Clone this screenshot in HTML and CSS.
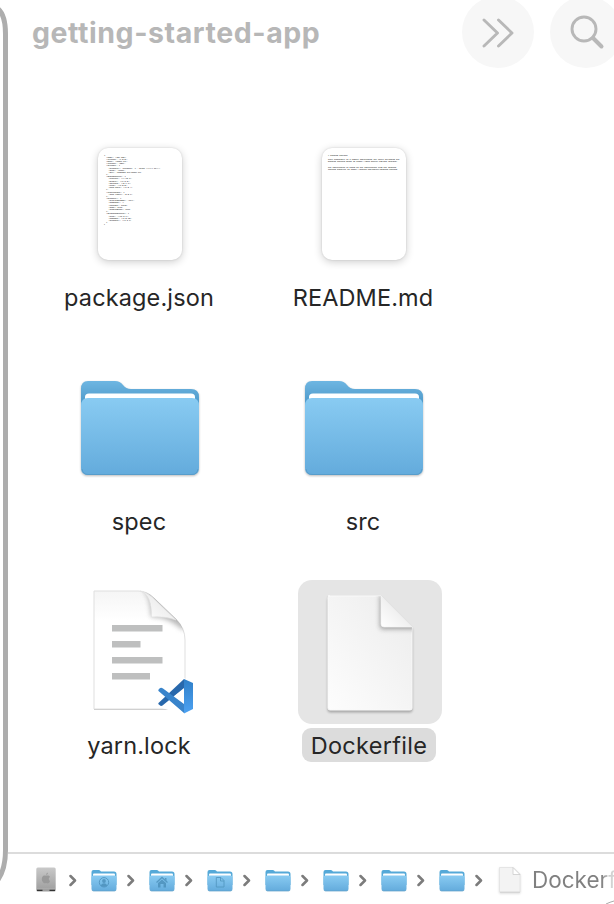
FILE: index.html
```html
<!DOCTYPE html>
<html lang="en">
<head>
<meta charset="utf-8">
<title>getting-started-app</title>
<link rel="stylesheet" href="styles.css">
</head>
<body>
<svg class="defs" width="0" height="0" aria-hidden="true">
  <defs>
    <linearGradient id="front" x1="0" y1="0" x2="0" y2="1"><stop offset="0" stop-color="#89cbf2"/><stop offset="1" stop-color="#63abdc"/></linearGradient>
    <linearGradient id="back" x1="0" y1="0" x2="0" y2="1"><stop offset="0" stop-color="#6eb6e2"/><stop offset=".25" stop-color="#529dcd"/></linearGradient>
    <linearGradient id="sheet" x1="1" y1="0" x2="0" y2="1"><stop offset="0" stop-color="#ececec"/><stop offset="1" stop-color="#fdfdfd"/></linearGradient>
    <linearGradient id="page" x1="0" y1="0" x2="0" y2="1"><stop offset="0" stop-color="#f5f5f5"/><stop offset=".25" stop-color="#fff"/></linearGradient>
    <linearGradient id="fold" x1="0" y1="1" x2=".6" y2=".4"><stop offset="0" stop-color="#fff"/><stop offset="1" stop-color="#ededed"/></linearGradient>
    <filter id="soft" x="-50%" y="-50%" width="200%" height="200%"><feGaussianBlur stdDeviation="2.8"/></filter>
    <linearGradient id="metal" x1="0" y1="0" x2="0" y2="1"><stop offset="0" stop-color="#c9c9c9"/><stop offset="1" stop-color="#9c9c9c"/></linearGradient>
    <linearGradient id="codeblue" x1="0" y1="0" x2="0" y2="1"><stop offset="0" stop-color="#2f7fc8"/><stop offset="1" stop-color="#4da2f2"/></linearGradient>
    <clipPath id="blankclip"><path d="M2 1H55L86 32V113Q86 115 84 115H4Q2 115 2 113V3Q2 1 4 1Z"/></clipPath>
    <clipPath id="lockclip"><path d="M1 1H45Q54 1 61 8L83 29Q92 38 92 50V119H1Z"/></clipPath>
    <symbol id="folder" viewBox="0 0 120 98">
      <path d="M1 10Q1 2 8 2H35Q40 2 43 6Q46 10 51 10H111Q119 10 119 18V80H1Z" fill="url(#back)"/>
      <path d="M5 30V18Q5 14.500 9 14.500H111Q115 14.500 115 18V30Z" fill="#fff"/>
      <path d="M1 27Q1 19 8 19H112Q119 19 119 27V89Q119 96 112 96H8Q1 96 1 89Z" fill="url(#front)"/>
      <path d="M2 90Q3 95.500 8 95.500H112Q117 95.500 118 90" fill="none" stroke="#579dcb"/>
    </symbol>
    <symbol id="smallfolder" viewBox="0 0 26 23">
      <path d="M.5 3Q.5 1 2.500 1H8Q9 1 10 2.500H23Q25.500 2.500 25.500 5V16H.5Z" fill="#55a9d8"/>
      <path d="M2 9V5.500Q2 4.500 3 4.500H23Q24 4.500 24 5.500V9Z" fill="#fff"/>
      <path d="M.5 8.500Q.5 6.500 2.500 6.500H23.500Q25.500 6.500 25.500 8.500V20Q25.500 22 23.500 22H2.500Q.5 22 .5 20Z" fill="url(#front)"/>
      <path d="M1 21Q1.500 22 2.500 22H23.500Q24.500 22 25 21" fill="none" stroke="#609fc6" stroke-width=".7"/>
    </symbol>
    <symbol id="chevron" viewBox="0 0 8 12"><path d="M1.500 1.500L6 6L1.500 10.500" fill="none" stroke="#7c7c7c" stroke-width="2.500" stroke-linecap="round" stroke-linejoin="round"/></symbol>
  </defs>
</svg>

<main class="window">
  <header class="toolbar">
    <h1>getting-started-app</h1>
    <button class="round" aria-label="More"><svg width="72" height="72" viewBox="0 0 72 72"><path d="M22 24L35.500 37L22 50M36.500 24L50 37L36.500 50" class="tool"/></svg></button>
    <button class="round" aria-label="Search"><svg width="72" height="72" viewBox="0 0 72 72"><circle cx="34" cy="33" r="12" class="tool"/><path d="M43 42L51.500 50.500" class="tool handle"/></svg></button>
  </header>

  <section class="files">
    <div class="file">
      <div class="thumb"><div class="preview"><svg class="mini" width="84" height="112"><g class="code"></g></svg></div></div>
      <span class="name">package.json</span>
    </div>
    <div class="file">
      <div class="thumb"><div class="preview"><svg class="mini" width="84" height="112"><g class="readme"></g></svg></div></div>
      <span class="name">README.md</span>
    </div>
    <div class="file">
      <div class="thumb"><svg class="bigfolder" width="120" height="98"><use href="#folder"/></svg></div>
      <span class="name">spec</span>
    </div>
    <div class="file">
      <div class="thumb"><svg class="bigfolder" width="120" height="98"><use href="#folder"/></svg></div>
      <span class="name">src</span>
    </div>
    <div class="file">
      <div class="thumb">
        <svg class="lock" width="102" height="126" viewBox="0 0 102 126">
          <path d="M1 1H45Q54 1 61 8L83 29Q92 38 92 50V119H1Z" fill="url(#page)" stroke="#dfdfdf"/>
          <g clip-path="url(#lockclip)"><path d="M50 0Q57 4 58 27Q74 26 90 40L98 30L60 -4Z" fill="#888" opacity=".6" filter="url(#soft)"/></g>
          <path d="M1 119.500H82" stroke="#d0d0d0"/>
          <path d="M47 1Q59 4 58.500 27Q72 26 83 30L59 7Q53 2 47 1Z" fill="url(#fold)" stroke="#e2e2e2" stroke-width=".7"/>
          <path d="M19 35H69.500V41.500H19ZM19 51H47.500V57.500H19ZM19 67H69.500V73.500H19ZM19 83H57V89.500H19Z" fill="#bebfbf"/>
          <path d="M64 101L69 97L91 88L101 92V120L91 125L69 118L64 114L73 107Z" fill="#fff"/>
          <path d="M65.500 113L91 89V98L69.500 115.500Q68 116.500 66.500 115Q64.500 114 65.500 113Z" fill="#2868ac"/>
          <path d="M65.500 101Q64.500 100 66.500 98.500Q68 97 70 98.500L91 114V123Z" fill="#3984cb"/>
          <path d="M91 89L100 93V119L91 123.500Z" fill="url(#codeblue)"/>
          <path d="M91 99V113L81.500 106Z" fill="#fff"/>
        </svg>
      </div>
      <span class="name">yarn.lock</span>
    </div>
    <div class="file selected">
      <div class="thumb">
        <svg class="blank" width="90" height="118" viewBox="0 0 90 118">
          <path d="M2 1H55L86 32V113Q86 115 84 115H4Q2 115 2 113V3Q2 1 4 1Z" fill="url(#sheet)" stroke="#f9f9f9"/>
          <g clip-path="url(#blankclip)"><path d="M54 0V31Q54 34 57 34H90V12Z" fill="#777" opacity=".7" filter="url(#soft)"/></g>
          <path d="M55 1V29Q55 32 58 32H86Z" fill="url(#fold)" stroke="#f4f4f4" stroke-width=".7"/>
        </svg>
      </div>
      <span class="name">Dockerfile</span>
    </div>
  </section>

  <footer class="path">
    <svg class="drive" width="20" height="25" viewBox="0 0 20 25"><rect x=".3" y=".5" width="19.400" height="24" rx="1.500" fill="url(#metal)"/><path d="M1 21.500H19" stroke="#aaa"/><path d="M1 23.300H6.500M13.500 23.300H19" stroke="#333" stroke-width="1.200"/><path d="M10 8.800C11.500 8 14 8.500 14 10C12 11 13 13.500 14 14C13 17 11.500 16.500 10 16C8.500 16.500 7.500 16.500 6.200 14C5 10.500 7 7.500 10 8.800ZM10 8Q10 6.200 12 5.500Q12 7.500 10 8Z" fill="#999"/></svg>
    <svg class="sep" width="8" height="13"><use href="#chevron"/></svg>
    <svg class="step" width="26" height="23" viewBox="0 0 26 23"><use href="#smallfolder"/><g fill="#4b8fba" opacity=".8"><circle cx="13" cy="13.300" r="4.700" fill="none" stroke="#4b8fba"/><circle cx="13" cy="12" r="1.900"/><path d="M9.500 16.500Q13 12 16.500 16.500Q13 19 9.500 16.500Z"/></g></svg>
    <svg class="sep" width="8" height="13"><use href="#chevron"/></svg>
    <svg class="step" width="26" height="23" viewBox="0 0 26 23"><use href="#smallfolder"/><g opacity=".8"><path d="M7.500 13.500L13 8.500L18.500 13.500" fill="none" stroke="#4b8fba" stroke-width="1.300"/><path d="M9 14L13 10.500L17 14V18.500H14.500V15H11.500V18.500H9ZM16 9H17.500V12L16 10.500Z" fill="#4b8fba"/></g></svg>
    <svg class="sep" width="8" height="13"><use href="#chevron"/></svg>
    <svg class="step" width="26" height="23" viewBox="0 0 26 23"><use href="#smallfolder"/><path d="M9.300 8.500H14L17 11.500V18H9.300ZM13.500 8.500V12H17" fill="none" stroke="#5498c2" stroke-width=".9"/></svg>
    <svg class="sep" width="8" height="13"><use href="#chevron"/></svg>
    <svg class="step" width="26" height="23"><use href="#smallfolder"/></svg>
    <svg class="sep" width="8" height="13"><use href="#chevron"/></svg>
    <svg class="step" width="26" height="23"><use href="#smallfolder"/></svg>
    <svg class="sep" width="8" height="13"><use href="#chevron"/></svg>
    <svg class="step" width="26" height="23"><use href="#smallfolder"/></svg>
    <svg class="sep" width="8" height="13"><use href="#chevron"/></svg>
    <svg class="step" width="26" height="23"><use href="#smallfolder"/></svg>
    <svg class="sep" width="8" height="13"><use href="#chevron"/></svg>
    <svg class="doc" width="22" height="26" viewBox="0 0 22 26"><path d="M.5.500H14L21 7.500V25H.5Z" fill="#f3f3f3" stroke="#e5e5e5"/><path d="M14 .5V7.500H21Z" fill="#fff" stroke="#ccc" stroke-width=".8"/><path d="M1 25.300H21" stroke="#ccc" stroke-width=".7"/></svg>
    <span class="current">Dockerfile</span>
  </footer>
  <svg class="edge" width="9" height="904" viewBox="0 0 9 904"><path d="M-3 8Q5.500 14 5.500 34V850Q5.500 870 -3 881" fill="none" stroke="#adadad" stroke-width="5"/></svg>
  <svg class="corner" width="8" height="4"><path d="M0 4Q4 2 8 1" fill="none" stroke="#aaa"/></svg>
</main>
<script src="script.js"></script>
</body>
</html>
```

FILE: styles.css
```css
* { box-sizing: border-box; }
body { margin: 0; background: #fff; font-family: Inter, "Liberation Sans", sans-serif; color: #262626; }
svg { display: block; flex: none; }
.defs { position: absolute; }
.window { position: relative; width: 614px; height: 904px; overflow: hidden; display: flex; flex-direction: column; background: #fff; }
.toolbar { display: flex; height: 132px; padding-left: 32px; align-items: flex-start; }
h1 { margin: 15px 0 0; width: 430px; flex: none; font-size: 28.500px; line-height: 35px; font-weight: 700; color: #b7b7b7; white-space: nowrap; letter-spacing: .55px; }
.round { flex: none; width: 72px; height: 72px; padding: 0; margin: -4px 16px 0 0; border: 0; border-radius: 50%; background: #f7f7f7; }
.tool { fill: none; stroke: #b8b8b8; stroke-width: 2.900; stroke-linecap: round; stroke-linejoin: round; }
.handle { stroke-width: 4; }
.files { display: grid; grid-template-columns: 224px 224px; grid-template-rows: 224px 224px 224px; padding-left: 28px; height: 720px; }
.file { display: flex; flex-direction: column; align-items: center; }
.thumb { width: 144px; height: 144px; display: flex; justify-content: center; border-radius: 14px; }
.preview { width: 84px; height: 112px; margin-top: 16px; border-radius: 10px; background: #fff; box-shadow: 0 2px 8px #0003, 0 0 2px #0002; }
.bigfolder { margin-top: 23px; filter: drop-shadow(0 1px 1px #0004); }
.lock { margin: 10px 0 0 8px; }
.blank { margin: 15px 0 0 2px; filter: drop-shadow(0 2px 1px #0004); }
.name { height: 34px; margin-top: 4px; padding: 0 9px; line-height: 35px; font-size: 23.500px; letter-spacing: .13px; font-weight: 400; border-radius: 9px; white-space: nowrap; margin-left: -2px; }
.selected { padding-left: 12px; }
.selected .thumb { background: #e5e5e5; }
.selected .name { background: #dcdcdc; letter-spacing: .3px; }
.mini text { font-family: "Liberation Mono", monospace; font-size: 1.900px; fill: #555; stroke: #555; stroke-width: .06px; white-space: pre; }
.path { height: 52px; border-top: 2px solid #dcdcdc; padding: 1px 0 0 28px; display: flex; align-items: center; margin-left: 8px; }
.sep { margin: 2px 0 0 13px; }
.step { margin: 1px 0 0 14px; }
.step + .sep { margin-left: 10px; }
.doc { margin-left: 16px; filter: drop-shadow(0 1px 1px #0002); }
.current { margin-left: 11px; font-size: 22.500px; white-space: nowrap; color: transparent; background: linear-gradient(90deg, #808080 70px, #ccc 76px, #ddd 86px); background-clip: text; }
.edge { position: absolute; left: 0; top: 0; }
.corner { position: absolute; right: 0; bottom: 0; }
```

FILE: script.js
```js
const packageLines = [
  '{', '  "name": "101-app",', '  "version": "1.0.0",', '  "main": "index.js",', '  "license": "MIT",',
  '  "scripts": {', '    "prettify": "prettier -l --write \\"**/*.js\\"",', '    "test": "jest",',
  '    "dev": "nodemon src/index.js"', '  },', '  "dependencies": {', '    "express": "^4.18.2",',
  '    "mysql2": "^2.3.3",', '    "sqlite3": "^5.1.2",', '    "uuid": "^9.0.0",', '    "wait-port": "^1.0.4"',
  '  },', '  "resolutions": {', '    "ansi-regex": "5.0.1"', '  },', '  "prettier": {',
  '    "trailingComma": "all",', '    "tabWidth": 4,', '    "useTabs": false,', '    "semi": true,',
  '    "singleQuote": true', '  },', '  "devDependencies": {', '    "jest": "^29.3.1",',
  '    "nodemon": "^2.0.20",', '    "prettier": "^2.7.1"', '  }', '}'
];
const readmeLines = [
  '# Getting started', '', 'This repository is a sample application for users following the',
  'getting started guide at https://docs.docker.com/get-started/.', '', '',
  'The application is based on the application from the getting',
  'started tutorial at https://github.com/docker/getting-started'
];
function drawLines(selector, lines, step) {
  const group = document.querySelector(selector);
  lines.forEach((line, i) => {
    const text = document.createElementNS('http://www.w3.org/2000/svg', 'text');
    text.setAttribute('x', 6);
    text.setAttribute('y', 7.5 + i * step);
    text.textContent = line;
    group.appendChild(text);
  });
}
drawLines('.code', packageLines, 2.18);
drawLines('.readme', readmeLines, 2.1);
```
